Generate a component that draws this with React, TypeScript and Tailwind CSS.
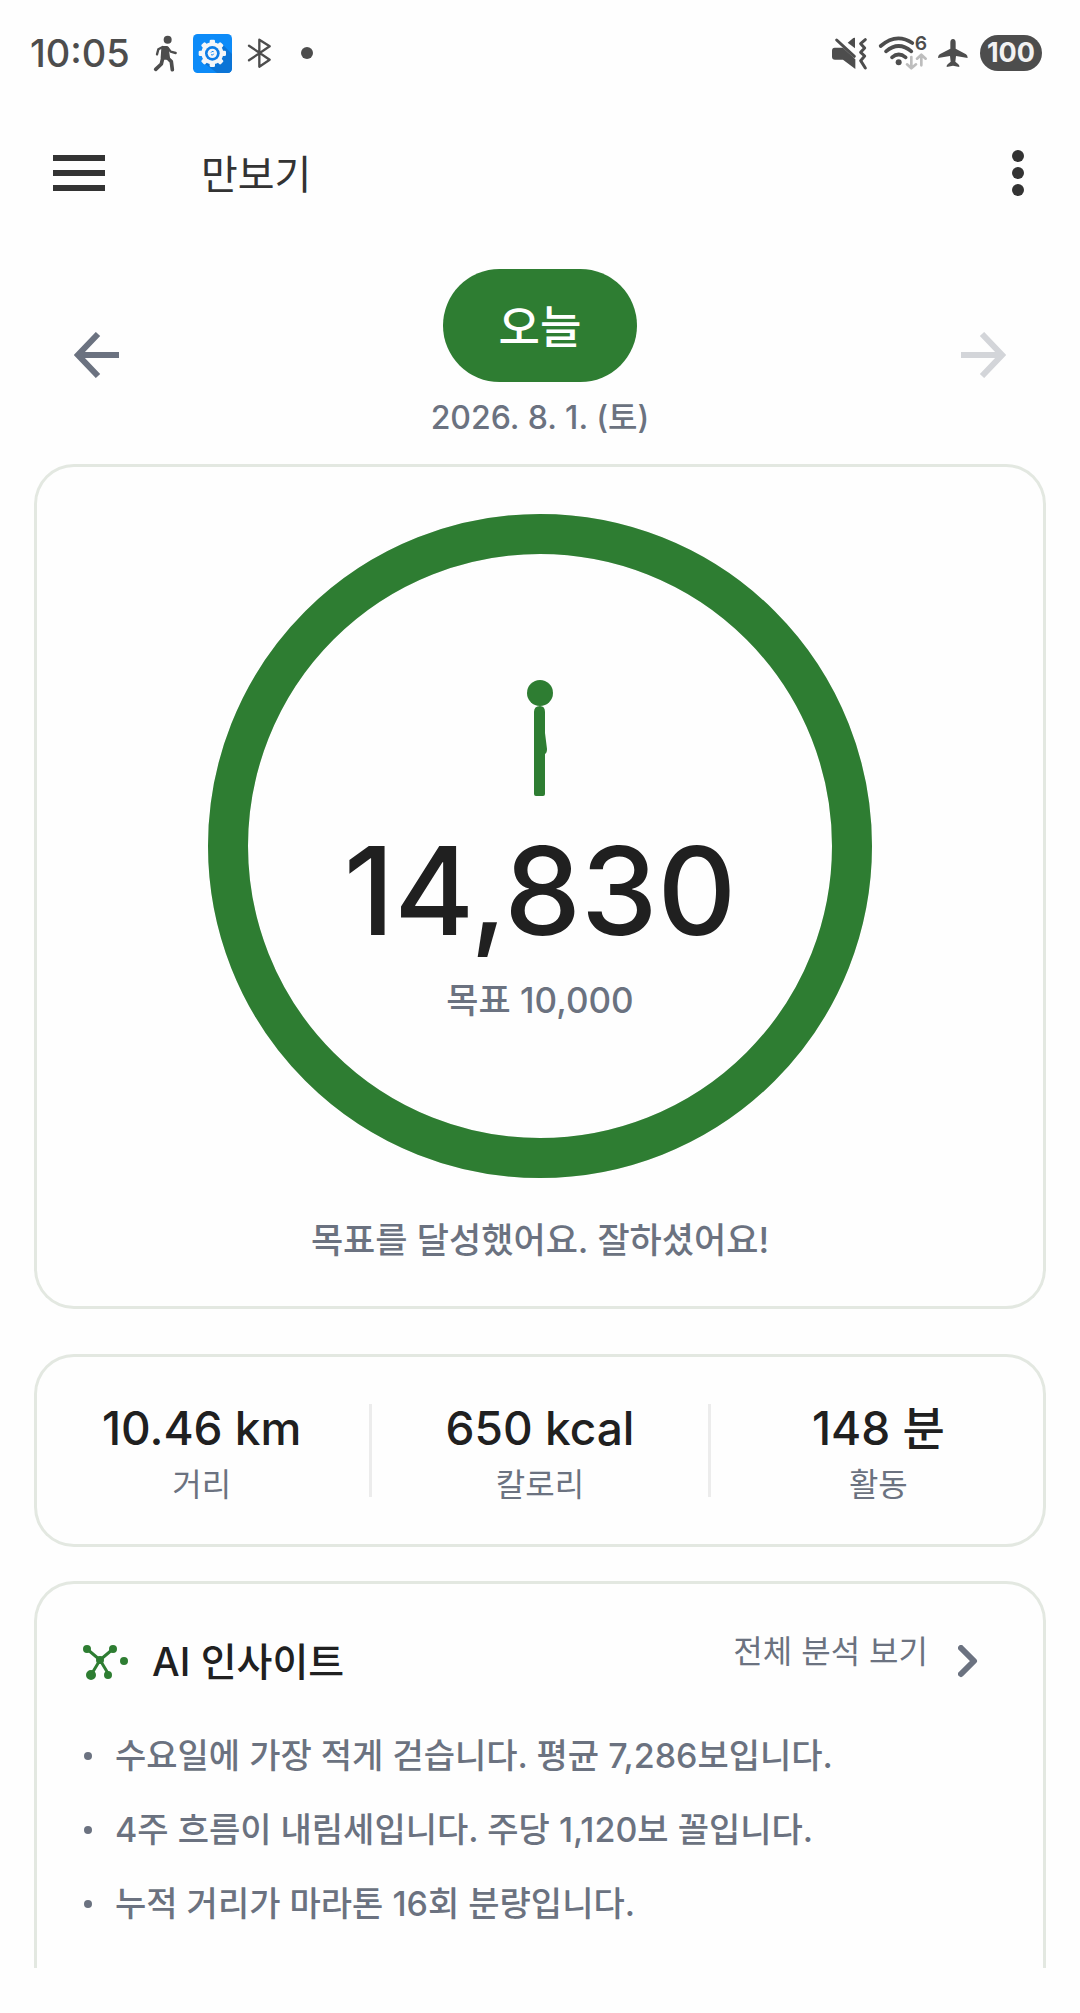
import { useState } from "react";

const stats = [
  { value: "10.46 km", label: "거리" },
  { value: "650 kcal", label: "칼로리" },
  { value: "148 분", label: "활동" },
];

const insights = [
  "수요일에 가장 적게 걷습니다. 평균 7,286보입니다.",
  "4주 흐름이 내림세입니다. 주당 1,120보 꼴입니다.",
  "누적 거리가 마라톤 16회 분량입니다.",
];

function WalkIcon() {
  return (
    <svg viewBox="456 98 81 123" className="h-[41px] w-[27px]" fill="none" stroke="#4d4d4d" strokeLinecap="round" strokeLinejoin="round">
      <circle cx="503" cy="118" r="12" fill="#4d4d4d" stroke="none" />
      <path d="M490 143 L500 143 L504 172 L488 172 Z" fill="#4d4d4d" strokeWidth="12" />
      <path d="M488 140 L475 147 L471 162" strokeWidth="7" />
      <path d="M503 142 L512 154 L527 158" strokeWidth="7" />
      <path d="M500 170 L514 184 L517 208" strokeWidth="11" />
      <path d="M488 174 L484 191 L467 207" strokeWidth="11" />
    </svg>
  );
}

function GearTile() {
  return (
    <svg viewBox="0 0 117 117" className="h-[39px] w-[39px]">
      <rect width="117" height="117" rx="14" fill="#0d8bf8" />
      <path d="M88 31 L117 60 V103 Q117 117 103 117 H72 L32 86 Z" fill="#0b74d6" />
      <g fill="#f4f6f8">
        <circle cx="58" cy="58" r="33" />
        {[0, 45, 90, 135, 180, 225, 270, 315].map((deg) => (
          <rect key={deg} x="50" y="17" width="16" height="16" rx="4" transform={`rotate(${deg} 58 58)`} />
        ))}
      </g>
      <circle cx="58" cy="58" r="22" fill="#0d7de6" />
      <circle cx="58" cy="58" r="14" fill="#f4f6f8" />
      <path d="M62 53 Q56 50 54 56 M54 62 Q60 66 62 59" fill="none" stroke="#0d8bf8" strokeWidth="3" />
    </svg>
  );
}

function BluetoothIcon() {
  return (
    <svg viewBox="738 112 81 96" className="h-8 w-[27px]" fill="none" stroke="#4d4d4d" strokeWidth="7" strokeLinecap="round" strokeLinejoin="round">
      <path d="M747 138 L809 180 L778 201 V120 L809 140 L747 182" />
    </svg>
  );
}

function MuteIcon() {
  return (
    <svg viewBox="92 100 117 114" className="h-[38px] w-[39px]" fill="#4d4d4d">
      <path d="M106 141 H131 L168 176 V205 L131 177 H107 Q98 177 98 168 V150 Q98 141 106 141 Z" />
      <path d="M167 111 V143 L145 126 L162 112 Z" />
      <path d="M112 118 L165 167" stroke="#4d4d4d" strokeWidth="9" strokeLinecap="round" />
      <path d="M198 117 L184 129 L196 142 L184 155 L196 166 L184 180 L198 202" fill="none" stroke="#4d4d4d" strokeWidth="9" strokeLinecap="round" strokeLinejoin="round" />
    </svg>
  );
}

function WifiIcon() {
  return (
    <svg viewBox="230 86 156 144" className="h-12 w-[52px]" fill="none" strokeLinecap="round">
      <g stroke="#4d4d4d" strokeWidth="11">
        <path d="M241 137 Q288 96 336 128" />
        <path d="M257 153 Q295 121 333 153" />
        <path d="M275 171 Q295 154 316 171" />
      </g>
      <circle cx="295" cy="186" r="9" fill="#4d4d4d" />
      <path d="M333 170 V203 M320 192 L333 204 L347 192" stroke="#bdbdbd" strokeWidth="8" strokeLinejoin="round" />
      <path d="M363 195 V164 M350 175 L363 163 L376 175" stroke="#bdbdbd" strokeWidth="8" strokeLinejoin="round" />
      <text x="343" y="149" fill="#4d4d4d" className="text-[58px] leading-none font-semibold">6</text>
    </svg>
  );
}

function PlaneIcon() {
  return (
    <svg viewBox="411 108 96 102" className="h-[34px] w-8" fill="#4d4d4d">
      <path d="M459 117 Q467 117 467 128 V146 L498 163 Q503 166 503 174 L468 168 L466 185 L475 193 Q479 197 478 201 L459 197 L440 201 Q439 197 443 193 L452 185 L450 168 L414 174 Q414 166 419 163 L451 146 V128 Q451 117 459 117 Z" />
    </svg>
  );
}

function StatusBar() {
  return (
    <div className="flex h-[106px] shrink-0 items-center justify-between pr-[38px] pl-[30px] text-[#4d4d4d]">
      <div className="flex items-center">
        <span className="text-[38px] leading-10 font-medium">10:05</span>
        <div className="ml-[22px] flex items-center gap-[14px]">
          <WalkIcon />
          <GearTile />
          <BluetoothIcon />
        </div>
        <span className="ml-7 size-3 rounded-full bg-[#4d4d4d]" />
      </div>
      <div className="flex items-center gap-2">
        <MuteIcon />
        <WifiIcon />
        <PlaneIcon />
        <span className="ml-[3px] flex h-9 w-[62px] items-center justify-center rounded-full bg-[#4d4d4d] text-[27px] font-bold text-[#f2f2f2]">
          100
        </span>
      </div>
    </div>
  );
}

function ArrowIcon() {
  return (
    <svg viewBox="0 0 46 46" className="size-[46px]" fill="none" stroke="currentColor" strokeWidth="6">
      <path d="M45 23 H4 M24 2 L4 23 L24 44" />
    </svg>
  );
}

function StepRing({ steps, goal }: { steps: number; goal: number }) {
  const length = 2 * Math.PI * 312;
  const filled = Math.min(steps / goal, 1) * length;

  return (
    <div className="grid place-items-center">
      <svg viewBox="0 0 664 664" className="size-[664px] [grid-area:1/1]" fill="none" strokeWidth="40">
        <circle cx="332" cy="332" r="312" stroke="#e3e8e1" />
        <circle cx="332" cy="332" r="312" stroke="#2e7d32" strokeDasharray={`${filled} ${length}`} transform="rotate(-90 332 332)" />
      </svg>
      <div className="flex flex-col items-center pt-2 [grid-area:1/1]">
        <svg viewBox="0 0 80 120" className="h-[120px] w-20" fill="#2e7d32">
          <circle cx="40" cy="16" r="13" />
          <path d="M34 35 Q34 29 40 29 Q45 29 45 35 V56 L47 72 Q47 76 45 77 V117 Q45 119 43 119 H36 Q34 119 34 117 Z" />
        </svg>
        <p className="mt-[14px] text-[122px] leading-[160px] font-medium text-[#202020]">{steps.toLocaleString("en-US")}</p>
        <p className="mt-[6px] text-[35px] leading-[46px] font-medium text-[#6b7280]">목표 {goal.toLocaleString("en-US")}</p>
      </div>
    </div>
  );
}

function InsightIcon() {
  return (
    <svg viewBox="0 0 46 36" className="h-9 w-[46px]" fill="#2e7d32" stroke="#2e7d32" strokeWidth="2">
      <path d="M5 5 L18 16 L31 5 M18 16 L9 31 M18 16 L27 31" fill="none" strokeWidth="3" />
      <circle cx="5" cy="5" r="3" />
      <circle cx="31" cy="5" r="3" />
      <circle cx="18" cy="16" r="3" />
      <circle cx="42" cy="17" r="3" />
      <circle cx="9" cy="31" r="4" />
      <circle cx="26" cy="31" r="3" />
    </svg>
  );
}

export default function App() {
  const [menuOpen, setMenuOpen] = useState(false);

  return (
    <div className="flex h-screen flex-col bg-[#fefefe] font-[Inter,'Noto_Sans_CJK_KR',sans-serif] text-[#202020]">
      <StatusBar />

      <header className="flex h-[134px] shrink-0 items-center pr-14 pl-[53px] text-[#333]">
        <button aria-label="메뉴" aria-expanded={menuOpen} onClick={() => setMenuOpen(!menuOpen)} className="flex w-[52px] flex-col gap-[9px]">
          <span className="h-[6px] bg-[#333]" />
          <span className="h-[6px] bg-[#333]" />
          <span className="h-[6px] bg-[#333]" />
        </button>
        <h1 className="ml-24 flex-1 pt-[3px] text-[40px] leading-[46px]">만보기</h1>
        <button aria-label="더보기" className="flex flex-col gap-[5px]">
          <span className="size-3 rounded-full bg-[#333]" />
          <span className="size-3 rounded-full bg-[#333]" />
          <span className="size-3 rounded-full bg-[#333]" />
        </button>
      </header>

      <main className="min-h-0 flex-1 overflow-y-auto px-[34px] pt-[29px] [scrollbar-width:none]">
        <div className="flex items-center justify-between px-10">
          <button aria-label="이전 날" className="text-[#6b7280]">
            <ArrowIcon />
          </button>
          <div className="flex flex-col items-center">
            <button className="flex h-[113px] items-center rounded-full bg-[#2e7d32] px-14 pt-1 text-[45px] leading-[54px] font-medium text-white">
              오늘
            </button>
            <p className="mt-[14px] text-[32px] leading-[44px] font-medium text-[#6b7280]">2026. 8. 1. (토)</p>
          </div>
          <button aria-label="다음 날" disabled className="rotate-180 text-[#d3d5d9]">
            <ArrowIcon />
          </button>
        </div>

        <section className="mt-6 flex flex-col items-center rounded-[40px] pt-[50px] pb-[46px] ring-3 ring-[#e3e8e1] ring-inset">
          <StepRing steps={14830} goal={10000} />
          <p className="mt-[39px] text-[35px] leading-[46px] font-medium text-[#6b7280]">목표를 달성했어요. 잘하셨어요!</p>
        </section>

        <section className="mt-[45px] flex items-center rounded-[40px] ring-3 ring-[#e3e8e1] ring-inset">
          {stats.map((stat, i) => (
            <div key={stat.label} className="contents">
              {i > 0 && <span className="h-[93px] w-[3px] bg-[#ececec]" />}
              <div className="flex flex-1 flex-col items-center gap-1 pt-11 pb-[39px]">
                <p className="text-[46px] leading-[60px] font-medium">{stat.value}</p>
                <p className="text-[32px] leading-[46px] text-[#6b7280]">{stat.label}</p>
              </div>
            </div>
          ))}
        </section>

        <section className="mt-[34px] rounded-[40px] px-12 pt-[45px] pb-20 ring-3 ring-[#e3e8e1] ring-inset">
          <div className="flex h-[72px] items-center">
            <InsightIcon />
            <h2 className="ml-6 flex-1 text-[39px] leading-[54px] font-medium">AI 인사이트</h2>
            <a href="#insights" className="flex items-center gap-[30px] pr-5 text-[#6b7280]">
              <span className="pb-5 text-[32px] leading-[46px]">전체 분석 보기</span>
              <svg viewBox="0 0 20 34" className="h-[34px] w-5" fill="none" stroke="currentColor" strokeWidth="6" strokeLinecap="round" strokeLinejoin="round">
                <path d="M3 3 L16 16 L3 29" />
              </svg>
            </a>
          </div>
          <ul className="mt-[21px] text-[34px] leading-[74px] font-medium text-[#6b7280]">
            {insights.map((line) => (
              <li key={line} className="flex items-center gap-[23px]">
                <span className="ml-[2px] size-2 rounded-full bg-[#6b7280]" />
                {line}
              </li>
            ))}
          </ul>
        </section>
      </main>

      <div className="h-[45px] shrink-0" />
    </div>
  );
}
